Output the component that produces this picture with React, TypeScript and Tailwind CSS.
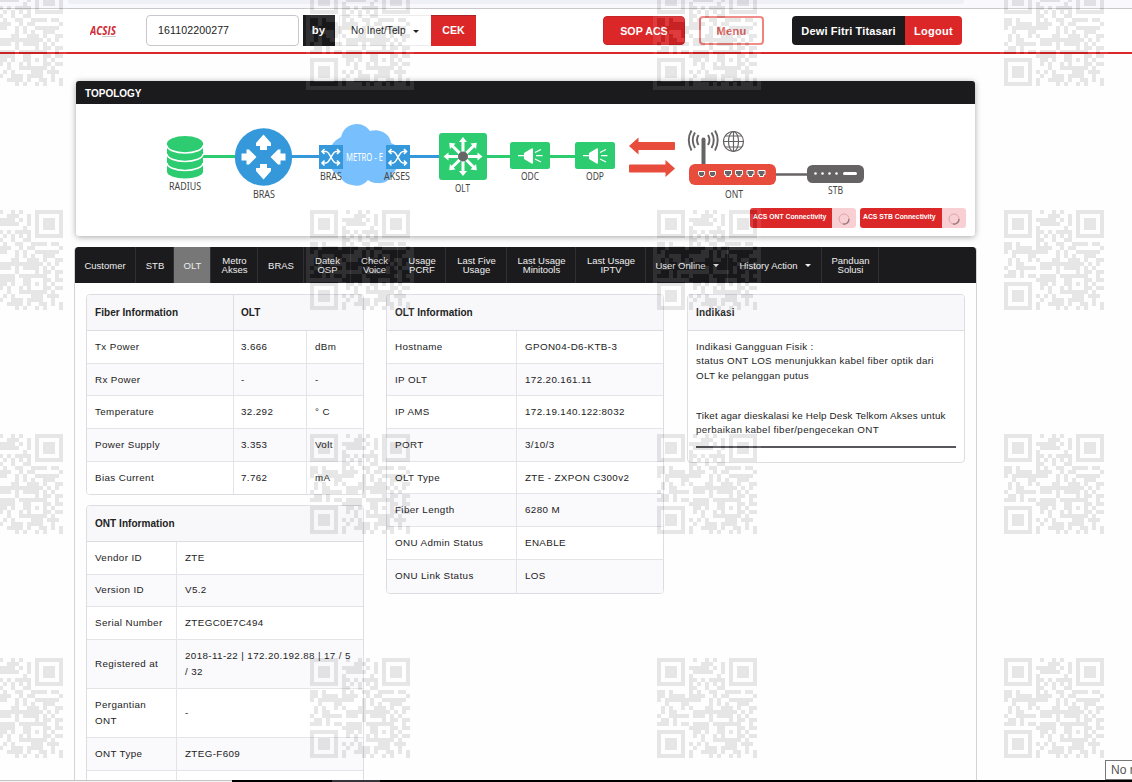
import React from "react";

const CODE = [
  "1111111001001010001111111",
  "1000001000011100101000001",
  "1011101011111010101011101",
  "1011101001111100101011101",
  "1011101010000001001011101",
  "1000001011010111101000001",
  "1111111010101010101111111",
  "0000000011001001100000000",
  "1101000010100110011110110",
  "1101111011110010110000001",
  "1011111111100101001111110",
  "0010001100000101010011100",
  "0101001010001100111010011",
  "0101100001111111111101010",
  "1001111101110101111010100",
  "0110100000000100001011011",
  "1110101101111011111110010",
  "0000000011111001100011011",
  "1111111001101001101010100",
  "1000001001010010100011011",
  "1011101000010011111110100",
  "1011101010101000011101110",
  "1011101001001110111100100",
  "1000001010011110100110101",
  "1111111010000101001010001",
];

const MODULES = CODE.map((row, y) =>
  row.split("").map((c, x) => (c === "1" ? `M${x * 4 + 4} ${y * 4 + 4}h4v4h-4z` : "")).join("")
).join("");

function Mark() {
  return (
    <svg width="108" height="108" className="opacity-[0.09] shrink-0" shapeRendering="crispEdges">
      <rect width="108" height="108" fill="#fff" />
      <path d={MODULES} fill="#000" />
    </svg>
  );
}

function Watermark() {
  return (
    <div className="pointer-events-none absolute -left-[41px] -top-[18px] grid grid-cols-[347px_347px_347px_108px] grid-rows-[224px_224px_224px_108px]">
      {Array.from({ length: 16 }, (_, i) => (
        <Mark key={i} />
      ))}
    </div>
  );
}

const Caret = ({ className = "" }: { className?: string }) => (
  <svg width="6" height="3" viewBox="0 0 6 3" className={className}>
    <path d="M0 0h6L3 3z" fill="currentColor" />
  </svg>
);

function Header() {
  return (
    <header className="flex h-[45px] shrink-0 border-b-2 border-[#dc2729] bg-white pl-[90px] text-[11px] font-bold">
      <svg width="56" height="43" className="shrink-0">
        <text x="0" y="25.500" textLength="26" lengthAdjust="spacingAndGlyphs" fill="#cf2c35" fontFamily="Open Sans, sans-serif" fontSize="12" fontStyle="italic" fontWeight="700">ACSIS</text>
        <path d="M12 27.500h14" stroke="#ccc" />
      </svg>
      <div className="mt-[6px] flex h-[31px] w-[153px] items-center rounded border border-[#c9c7cc] pl-[11px] pt-px text-[10.6px] font-normal tracking-[0.1px] text-[#222]">161102200277</div>
      <div className="ml-1 mt-[6px] flex h-[31px] w-[32px] items-center justify-center bg-[#1b1b1d] pr-px text-[11.5px] text-white">by</div>
      <div className="ml-1 mt-[6px] flex h-[31px] w-[92px] items-center border border-r-0 border-[#ececee] pl-[11px] text-[10px] font-normal tracking-[0.1px] text-[#222]">
        No Inet/Telp
        <Caret className="ml-[7px] mt-px" />
      </div>
      <div className="mt-[6px] flex h-[31px] w-[45px] items-center justify-center border-t border-[#a52528] bg-[#dc2729] text-[10.6px] text-white">CEK</div>
      <div className="ml-[127px] mt-[7px] flex h-[29px] w-[82px] items-center justify-center rounded border border-[#c62428] bg-[#dc2729] pt-px text-[10.7px] text-white">SOP ACS</div>
      <div className="ml-[14px] mt-[7px] flex h-[29px] w-[65px] items-center justify-center rounded border-2 border-[#f0827c] pt-px tracking-[0.3px] text-[#dd6560]">Menu</div>
      <div className="ml-7 mt-[7px] flex h-[29px] w-[113px] items-center justify-center rounded-l bg-[#1b1b1d] pt-px tracking-[0.15px] text-white">Dewi Fitri Titasari</div>
      <div className="mt-[7px] flex h-[29px] w-[57px] items-center justify-center rounded-r bg-[#dc2729] pt-px tracking-[0.3px] text-white">Logout</div>
    </header>
  );
}

function Label({ x, y, w, children, fill = "#444" }: { x: number; y: number; w: number; children: string; fill?: string }) {
  return (
    <text x={x} y={y} textLength={w} lengthAdjust="spacingAndGlyphs" fontSize="10.500" fill={fill} fontFamily="Noto Sans, sans-serif">
      {children}
    </text>
  );
}

function Shuffle({ x }: { x: number }) {
  return (
    <g transform={`translate(${x} 145)`}>
      <rect width="24" height="24" fill="#3498db" />
      <path d="M3 6.500h4c4 0 6 11.500 10 11.500h3M3 18h4c4 0 6-11.500 10-11.500h3M5.500 4L3 6.500 5.500 9M5.500 15.500L3 18l2.500 2.500M18 4l2.500 2.500L18 9M18 15.500l2.500 2.500-2.500 2.500" fill="none" stroke="#fff" strokeWidth="1.600" />
    </g>
  );
}

function Splitter({ x }: { x: number }) {
  return (
    <g transform={`translate(${x} 142)`}>
      <rect width="40" height="27" rx="2.500" fill="#2ecc71" />
      <path d="M14 11L21.500 6.500H23v15h-1.500L14 17z" fill="#fff" />
      <path d="M8 13.700h8M25 10.500l6-3M26 13.700h6.500M25 17l6 3" stroke="#fff" strokeWidth="1.300" />
    </g>
  );
}

function TopologyDrawing() {
  return (
    <svg width="899" height="104" viewBox="76 104 899 104" className="block shrink-0">
      <path d="M203 156.500h34M486 156.500h24M549 156.500h26" stroke="#2ecc71" strokeWidth="3" />
      <path d="M290 156.500h30M408 156.500h32" stroke="#3498db" strokeWidth="3" />
      <path d="M167 143v28.500a18 7 0 0 0 36 0V143z" fill="#2ecc71" />
      <ellipse cx="185" cy="143.500" rx="18" ry="7.500" fill="#2ecc71" />
      <path d="M167 145.500a18 7.500 0 0 0 36 0M167 154a18 7.500 0 0 0 36 0M167 163a18 7.500 0 0 0 36 0" fill="none" stroke="#fff" strokeWidth="1.600" />
      <circle cx="263.500" cy="157" r="28.700" fill="#3498db" />
      <g fill="#fff">
        <path d="M263.500 134.500l7.500 8.500v3h-4v4h-7v-4h-4v-3z" />
        <path d="M263.500 179.500l7.500-8.500v-3h-4v-4h-7v4h-4v3z" />
        <path d="M256.500 157l-7.500-7.500h-2.500v4h-5v7h5v4h2.500z" />
        <path d="M270.500 157l7.500-7.500h2.500v4h5v7h-5v4H278z" />
      </g>
      <path d="M341 137c2-8 8-13 16-13 6 0 10 3 13 7 9-3 20 2 21 12 6 2 10 7 9 13-1 8-3 14-8 18-1 6-8 10-15 9-5 0-7-2-9-3-4 5-10 7-16 5-7-1-11-5-12-10-9-2-12-11-9-19-3-8 2-15 10-19z" fill="#78c0fd" />
      <Shuffle x={319} />
      <Shuffle x={386} />
      <Label x={346} y={161} w={37} fill="#fff">METRO - E</Label>
      <rect x="439" y="133" width="48" height="47" rx="3" fill="#2ecc71" />
      {[0, 45, 90, 135, 180, 225, 270, 315].map((a) => (
        <path key={a} transform={`rotate(${a} 463 156.500)`} d="M461.500 156v-14h-2.500l4-5 4 5h-2.500v14z" fill="#fff" />
      ))}
      <circle cx="463" cy="156.500" r="5" fill="#666" />
      <Splitter x={510} />
      <Splitter x={575} />
      <path d="M629 146l9.500-8.500v4.500H674q1 0 1 1v6q0 1-1 1h-35.500v4.500zM675 168.500l-9.500-8.500v4.500H630q-1 0-1 1v6q0 1 1 1h35.500v4.500z" fill="#e74c3c" />
      <path d="M776 174.500h33" stroke="#666364" strokeWidth="2.500" />
      <path d="M703.500 139.500V165" stroke="#666364" strokeWidth="4" strokeLinecap="round" />
      <path d="M698.500 135q-3 5 0 10M695 132.500q-4.500 7.500 0 15.500M691.500 130.500q-5.500 9.500 0 20M708 135q3 5 0 10M711.500 132.500q4.500 7.500 0 15.500M715 130.500q5.500 9.500 0 20" fill="none" stroke="#666364" strokeWidth="1.900" />
      <g fill="none" stroke="#666364" strokeWidth="1.200">
        <circle cx="733.500" cy="141.500" r="10" />
        <ellipse cx="733.500" cy="141.500" rx="5" ry="10" />
        <path d="M733.500 131.500v20M723.500 141.500h20M725.500 136h16M725.500 147h16" />
      </g>
      <rect x="689" y="164" width="87" height="21" rx="6" fill="#e74c3c" />
      {[701.5, 712.5].map((x) => (
        <path key={x} d={`M${x - 3} 171.500h6v3l-1.500 2h-3l-1.500-2z`} fill="#666" stroke="#fff" strokeWidth="1" />
      ))}
      {[728, 739, 750.5, 761.5].map((x) => (
        <path key={x} d={`M${x - 3.5} 170.500h7v4h-1.500v2h-4v-2h-1.500z`} fill="#666" stroke="#fff" strokeWidth="1" />
      ))}
      <rect x="807" y="165" width="57" height="18" rx="5.500" fill="#666364" />
      {[815.5, 822.5, 829.5, 836.5].map((x) => (
        <circle key={x} cx={x} cy="173.500" r="1.300" fill="#fff" />
      ))}
      <rect x="843" y="172" width="14" height="3" rx="1.500" fill="#fff" />
      <Label x={169} y={190} w={32}>RADIUS</Label>
      <Label x={253} y={198} w={22}>BRAS</Label>
      <Label x={320} y={180} w={22}>BRAS</Label>
      <Label x={384} y={180} w={26}>AKSES</Label>
      <Label x={455} y={192} w={15}>OLT</Label>
      <Label x={521} y={180} w={18}>ODC</Label>
      <Label x={586} y={180} w={18}>ODP</Label>
      <Label x={725} y={198} w={18}>ONT</Label>
      <Label x={828} y={194} w={15}>STB</Label>
    </svg>
  );
}

function Connectivity({ label }: { label: string }) {
  return (
    <div className="flex h-5 overflow-hidden rounded-[3px] text-[6.8px] font-bold text-white">
      <div className="w-[82px] whitespace-nowrap bg-[#dc2729] pl-[3px] leading-[18px]">{label}</div>
      <div className="flex w-6 items-center justify-center bg-[#f8d0d3]">
        <svg width="12" height="12" className="mt-px">
          <circle cx="6" cy="6" r="5" fill="none" stroke="#e0a4a8" />
          <path d="M11 6a5 5 0 0 1-6 5" fill="none" stroke="#98777c" strokeWidth="1.300" />
        </svg>
      </div>
    </div>
  );
}

const TABS: { w: string; lines: string[]; active?: boolean; menu?: boolean }[] = [
  { w: "w-[62px]", lines: ["Customer"] },
  { w: "w-[38px]", lines: ["STB"] },
  { w: "w-[37px]", lines: ["OLT"], active: true },
  { w: "w-[47px]", lines: ["Metro", "Akses"] },
  { w: "w-[46px]", lines: ["BRAS"] },
  { w: "w-[47px]", lines: ["Datek", "OSP"] },
  { w: "w-[47px]", lines: ["Check", "Voice"] },
  { w: "w-[48px]", lines: ["Usage", "PCRF"] },
  { w: "w-[61px]", lines: ["Last Five", "Usage"] },
  { w: "w-[69px]", lines: ["Last Usage", "Minitools"] },
  { w: "w-[70px]", lines: ["Last Usage", "IPTV"] },
  { w: "w-[82px]", lines: ["User Online"], menu: true },
  { w: "w-[94px]", lines: ["History Action"], menu: true },
  { w: "w-[57px]", lines: ["Panduan", "Solusi"] },
];

function TabBar() {
  return (
    <nav className="-mx-px flex h-9 shrink-0 rounded-t bg-[#1b1b1d] text-[9.5px] leading-[9px] text-[#eee]">
      {TABS.map((t, i) => (
        <div key={i} className={`${t.w} flex shrink-0 items-center justify-center border-r border-[#303032] pl-px text-center ${t.active ? "bg-[#777]" : ""}`}>
          <span className="whitespace-nowrap">
            {t.lines.map((l) => (
              <span key={l} className="block">{l}</span>
            ))}
          </span>
          {t.menu && <Caret className="ml-[7px] mt-px" />}
        </div>
      ))}
    </nav>
  );
}

function Panel({ cols, head, rows, sizes }: { cols: string; head: string[]; rows: string[][]; sizes?: string[] }) {
  return (
    <div className="w-[278px] shrink-0 overflow-hidden rounded border border-[#dddce1] bg-white">
      <div className={`grid h-9 border-b border-[#dddce1] bg-[#f8f8fa] font-bold ${cols}`}>
        {head.map((h, i) => (
          <div key={i} className={`flex items-center ${i ? "col-span-2 border-l border-[#dddce1] pl-[7px]" : "pl-2 tracking-[0.05px]"} ${head.length === 1 ? "col-span-full" : ""}`}>{h}</div>
        ))}
      </div>
      {rows.map((r, i) => (
        <div key={i} className={`grid ${cols} ${sizes?.[i] ?? "h-[32.7px]"} ${i < rows.length - 1 ? "border-b border-[#e4e3e7]" : ""} ${i % 2 ? "bg-[#faf9fc]" : "bg-white"} text-[9.8px] tracking-[0.38px]`}>
          {r.map((c, j) => (
            <div key={j} className={`flex items-center whitespace-pre leading-4 ${j ? "border-l border-[#e4e3e7]" : ""} ${j === 1 && r.length === 3 ? "pl-[7px]" : "pl-2"}`}>{c}</div>
          ))}
        </div>
      ))}
    </div>
  );
}

export default function App() {
  return (
    <div className="relative flex h-[782px] w-[1132px] flex-col overflow-hidden bg-[#fefefe] font-['Liberation_Sans',Arial,sans-serif] text-[10px] text-[#222]">
      <div className="h-[9px] shrink-0 border-b border-[#c9c7cb] bg-[#f9f8fc] pl-[68px]">
        <div className="h-1 w-[896px] rounded-b bg-[#efeff6]" />
      </div>
      <Header />
      <section className="ml-[76px] mt-[27px] flex h-[155px] w-[899px] shrink-0 flex-col rounded-[3px] bg-white shadow-[0_1px_6px_rgba(0,0,0,0.35)]">
        <h2 className="flex h-[23px] shrink-0 items-center rounded-t-[3px] bg-[#1b1b1d] pl-[9px] pt-px font-bold text-white">TOPOLOGY</h2>
        <TopologyDrawing />
        <div className="flex justify-end gap-1 pr-[9px]">
          <Connectivity label="ACS ONT Connectivity" />
          <Connectivity label="ACS STB Connectivity" />
        </div>
      </section>
      <main className="ml-[74px] mt-[11px] flex h-[533px] w-[903px] shrink-0 flex-col overflow-hidden rounded-t border-x border-[#d4d3d8]">
        <TabBar />
        <div className="flex items-start pl-[11px] pt-[11px]">
          <div className="flex flex-col gap-[9.5px]">
            <Panel
              cols="grid-cols-[146px_73px_1fr]"
              head={["Fiber Information", "OLT"]}
              rows={[
                ["Tx Power", "3.666", "dBm"],
                ["Rx Power", "-", "-"],
                ["Temperature", "32.292", "° C"],
                ["Power Supply", "3.353", "Volt"],
                ["Bias Current", "7.762", "mA"],
              ]}
            />
            <Panel
              cols="grid-cols-[89px_1fr]"
              head={["ONT Information"]}
              sizes={["h-[33px]", "h-8", "h-[33px]", "h-[49px]", "h-[49px]", "h-[33px]", "h-[33px]"]}
              rows={[
                ["Vendor ID", "ZTE"],
                ["Version ID", "V5.2"],
                ["Serial Number", "ZTEGC0E7C494"],
                ["Registered at", "2018-11-22 | 172.20.192.88 | 17 / 5\n/ 32"],
                ["Pergantian\nONT", "-"],
                ["ONT Type", "ZTEG-F609"],
                ["", ""],
              ]}
            />
          </div>
          <div className="ml-[22px]">
            <Panel
              cols="grid-cols-[129px_1fr]"
              head={["OLT Information"]}
              rows={[
                ["Hostname", "GPON04-D6-KTB-3"],
                ["IP OLT", "172.20.161.11"],
                ["IP AMS", "172.19.140.122:8032"],
                ["PORT", "3/10/3"],
                ["OLT Type", "ZTE - ZXPON C300v2"],
                ["Fiber Length", "6280 M"],
                ["ONU Admin Status", "ENABLE"],
                ["ONU Link Status", "LOS"],
              ]}
            />
          </div>
          <div className="ml-[23px] h-[169px] w-[278px] shrink-0 overflow-hidden rounded border border-[#dddce1] bg-white">
            <div className="flex h-9 items-center border-b border-[#dddce1] bg-[#f8f8fa] pl-2 font-bold tracking-[0.2px]">Indikasi</div>
            <div className="whitespace-nowrap px-2 pt-[9px] text-[9.8px] leading-[14.3px] tracking-[0.3px]">
              <p>Indikasi Gangguan Fisik :</p>
              <p>status ONT LOS menunjukkan kabel fiber optik dari</p>
              <p>OLT ke pelanggan putus</p>
              <p className="mt-[26px] tracking-[0.2px]">Tiket agar dieskalasi ke Help Desk Telkom Akses untuk</p>
              <p className="tracking-[0.35px]">perbaikan kabel fiber/pengecekan ONT</p>
              <div className="mt-[9px] h-[2px] bg-[#58575b]" />
            </div>
          </div>
        </div>
      </main>
      <div className="flex h-[2px] shrink-0">
        <div className="w-[232px] border-t border-[#c4c3c6] bg-[#f2f2f2]" />
        <div className="w-[100px] bg-black" />
        <div className="w-12 bg-[#36343b]" />
        <div className="flex-1 bg-black" />
      </div>
      <Watermark />
      <div className="absolute left-[1105px] top-[760px] h-5 w-[40px] overflow-hidden whitespace-nowrap border border-[#777] bg-white pl-[5px] text-[12px] leading-[18px] text-[#555]">No n</div>
    </div>
  );
}
